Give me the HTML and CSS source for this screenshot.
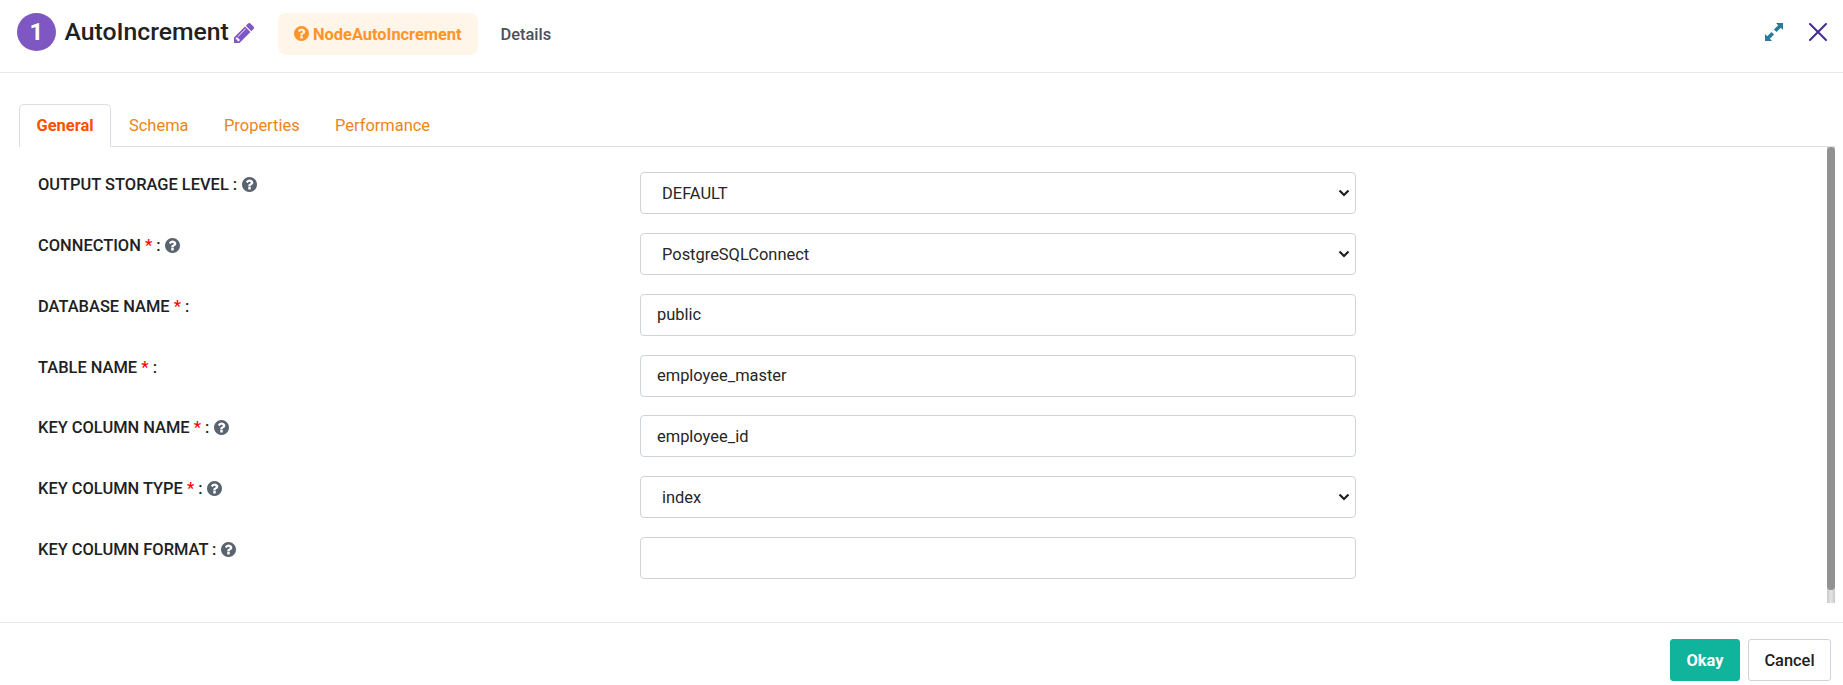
FILE: index.html
```html
<!DOCTYPE html>
<html lang="en">
<head>
<meta charset="utf-8">
<title>AutoIncrement</title>
<link rel="stylesheet" href="styles.css">
</head>
<body>
<svg class="defs" width="0" height="0">
  <symbol id="help" viewBox="128 128 1536 1536"><path d="M1024 1376v-192q0-14-9-23t-23-9h-192q-14 0-23 9t-9 23v192q0 14 9 23t23 9h192q14 0 23-9t9-23zM1280 704q0-88-55.500-163t-138.500-116-170-41q-243 0-371 213-15 24 8 42l132 100q7 6 19 6 16 0 25-12 53-68 86-92 34-24 86-24 48 0 85.500 26t37.500 59q0 38-20 61t-68 45q-63 28-115.500 86.500t-52.500 125.500v36q0 14 9 23t23 9h192q14 0 23-9t9-23q0-19 21.500-49.500t54.500-49.500q32-18 49-28.500t46-35 44.500-48 28-60.500 12.500-81zM1664 896q0 209-103 385.500t-279.500 279.500-385.500 103-385.500-103-279.500-279.500-103-385.500 103-385.500 279.500-279.500 385.500-103 385.500 103 279.500 279.500 103 385.500z"/></symbol>
</svg>
<div class="dialog">
  <header class="header">
    <span class="badge">1</span>
    <h1 class="title">AutoIncrement</h1>
    <svg class="pencil" viewBox="128 149 1515 1515"><path d="M491 1536l91-91-235-235-91 91v107h128v128h107zM1014 608q0-22-22-22-10 0-17 7l-542 542q-7 7-7 17 0 22 22 22 10 0 17-7l542-542q7-7 7-17zM960 416l416 416-832 832h-416v-416zM1643 512q0 53-37 90l-166 166-416-416 166-165q36-38 90-38 53 0 91 38l235 234q37 39 37 91z"/></svg>
    <a class="pill"><svg class="help"><use href="#help"/></svg><span class="pill-text">NodeAutoIncrement</span></a>
    <a class="details">Details</a>
    <div class="actions">
      <svg class="expand" viewBox="0 0 18 18"><path d="M11 0h7v7l-2.200-2.200-4.300 4.300-2.600-2.600 4.300-4.300zM7 18H0v-7l2.200 2.200 4.300-4.300 2.600 2.600-4.300 4.300z"/></svg>
      <svg class="close" viewBox="0 0 18 18"><path d="M1 1l16 16M17 1L1 17"/></svg>
    </div>
  </header>
  <nav class="tabs">
    <a class="tab active">General</a>
    <a class="tab schema">Schema</a>
    <a class="tab properties">Properties</a>
    <a class="tab performance">Performance</a>
  </nav>
  <main class="body">
    <div class="form">
      <div class="row"><label class="label"><span>OUTPUT STORAGE LEVEL :</span><svg class="help"><use href="#help"/></svg></label><div class="control select"><span>DEFAULT</span><svg class="chevron" viewBox="0 0 12 8"><path d="M1.500 1.500L6 6l4.500-4.500"/></svg></div></div>
      <div class="row"><label class="label"><span>CONNECTION <b class="req">*</b> :</span><svg class="help"><use href="#help"/></svg></label><div class="control select"><span>PostgreSQLConnect</span><svg class="chevron" viewBox="0 0 12 8"><path d="M1.500 1.500L6 6l4.500-4.500"/></svg></div></div>
      <div class="row"><label class="label"><span>DATABASE NAME <b class="req">*</b> :</span></label><div class="control">public</div></div>
      <div class="row"><label class="label"><span>TABLE NAME <b class="req">*</b> :</span></label><div class="control">employee_master</div></div>
      <div class="row"><label class="label"><span>KEY COLUMN NAME <b class="req">*</b> :</span><svg class="help"><use href="#help"/></svg></label><div class="control">employee_id</div></div>
      <div class="row"><label class="label"><span>KEY COLUMN TYPE <b class="req">*</b> :</span><svg class="help"><use href="#help"/></svg></label><div class="control select"><span>index</span><svg class="chevron" viewBox="0 0 12 8"><path d="M1.500 1.500L6 6l4.500-4.500"/></svg></div></div>
      <div class="row"><label class="label"><span>KEY COLUMN FORMAT :</span><svg class="help"><use href="#help"/></svg></label><div class="control"></div></div>
    </div>
    <div class="track"><div class="thumb"></div></div>
  </main>
  <footer class="footer">
    <button class="btn okay">Okay</button>
    <button class="btn cancel">Cancel</button>
  </footer>
</div>
</body>
</html>
```

FILE: styles.css
```css
* { box-sizing: border-box; }
body { margin: 0; background: #fff; color: #212121; font: 16.45px/20px Roboto, sans-serif; overflow: hidden; }
.defs { display: block; height: 0; }
.dialog { width: 1843px; height: 685px; display: flex; flex-direction: column; }
.header { height: 73px; flex: none; display: flex; align-items: flex-start; padding: 13px 16px 0 17px; border-bottom: 1px solid #e9e9eb; }
.badge { width: 39px; height: 38px; border-radius: 50%; background: #7e57c2; color: #fff; font-size: 24px; font-weight: 700; line-height: 39px; text-align: center; }
.title { margin: 5px 0 0 8.5px; width: 165.5px; font-size: 24.75px; font-weight: 500; line-height: 28px; white-space: nowrap; }
.pencil { width: 20px; height: 20px; margin: 10px 0 0 4px; fill: #7e57c2; }
.pill { width: 200px; height: 42px; margin-left: 24px; padding: 1px 0 0 16px; border-radius: 8px; background: #fff5e8; color: #ff9429; font-size: 16.4px; font-weight: 700; display: flex; align-items: center; gap: 4px; }
.help { width: 15px; height: 15px; flex: none; fill: #5a6370; }
.pill .help { fill: #ff9429; margin-bottom: 2px; }
.details { margin: 12px 0 0 22.5px; color: #4b5058; font-weight: 500; }
.actions { margin-left: auto; display: flex; gap: 26px; padding-top: 10px; }
.expand { width: 18px; height: 18px; fill: #2b7a99; }
.close { width: 18px; height: 18px; fill: none; stroke: #452a91; stroke-width: 2; stroke-linecap: round; }
.tabs { height: 43px; flex: none; margin: 31px 8px 0 19px; display: flex; border-bottom: 1px solid #dcdde5; }
.tab { color: #ec8519; padding: 12px 0 0; }
.active { width: 92px; height: 43px; padding: 11px 0 0 16.5px; border: 1px solid #dcdde5; border-bottom: 0; border-radius: 5px 5px 0 0; background: #fff; color: #ff4f00; font-weight: 700; }
.schema { margin-left: 18px; width: 95px; }
.properties { width: 111px; }
.body { height: 456px; flex: none; display: flex; justify-content: space-between; padding: 0 8px 0 38px; }
.form { padding-top: 25.1px; width: 1318px; display: grid; grid-template-rows: repeat(7, 60.83px); }
.row { display: flex; }
.label { width: 602px; height: 25px; padding-top: 1px; display: flex; align-items: center; gap: 4.5px; font-size: 16.45px; font-weight: 500; }
.label .help { margin-bottom: 1px; }
.req { color: #f00; font-weight: 500; }
.control { width: 716px; height: 42px; border: 1px solid #ced4da; border-radius: 4px; padding: 10.3px 16px 0; color: #262626; }
.select { display: flex; align-items: center; justify-content: space-between; padding: 1.5px 5px 0 21px; }
.chevron { width: 12px; height: 8px; margin-bottom: 1px; fill: none; stroke: #212121; stroke-width: 2.200; }
.track { width: 8px; height: 456px; background: linear-gradient(90deg, #c8c8c8, #e4e4e4 50%, #c8c8c8); }
.thumb { height: 443px; border-radius: 4px; background: #929292; }
.footer { margin-top: 19px; height: 63px; border-top: 1px solid #e9e9eb; display: flex; justify-content: flex-end; gap: 8px; padding: 16px 12px 0 0; }
.btn { height: 42px; padding: 1px 0 0; font: 500 16.4px/20px Roboto, sans-serif; border-radius: 3px; border: 1px solid #ced4da; background: #fff; color: #212121; }
.okay { width: 70px; background: #10b39b; border-color: #10b39b; color: #fff; font-weight: 700; }
.cancel { width: 83px; }
```
